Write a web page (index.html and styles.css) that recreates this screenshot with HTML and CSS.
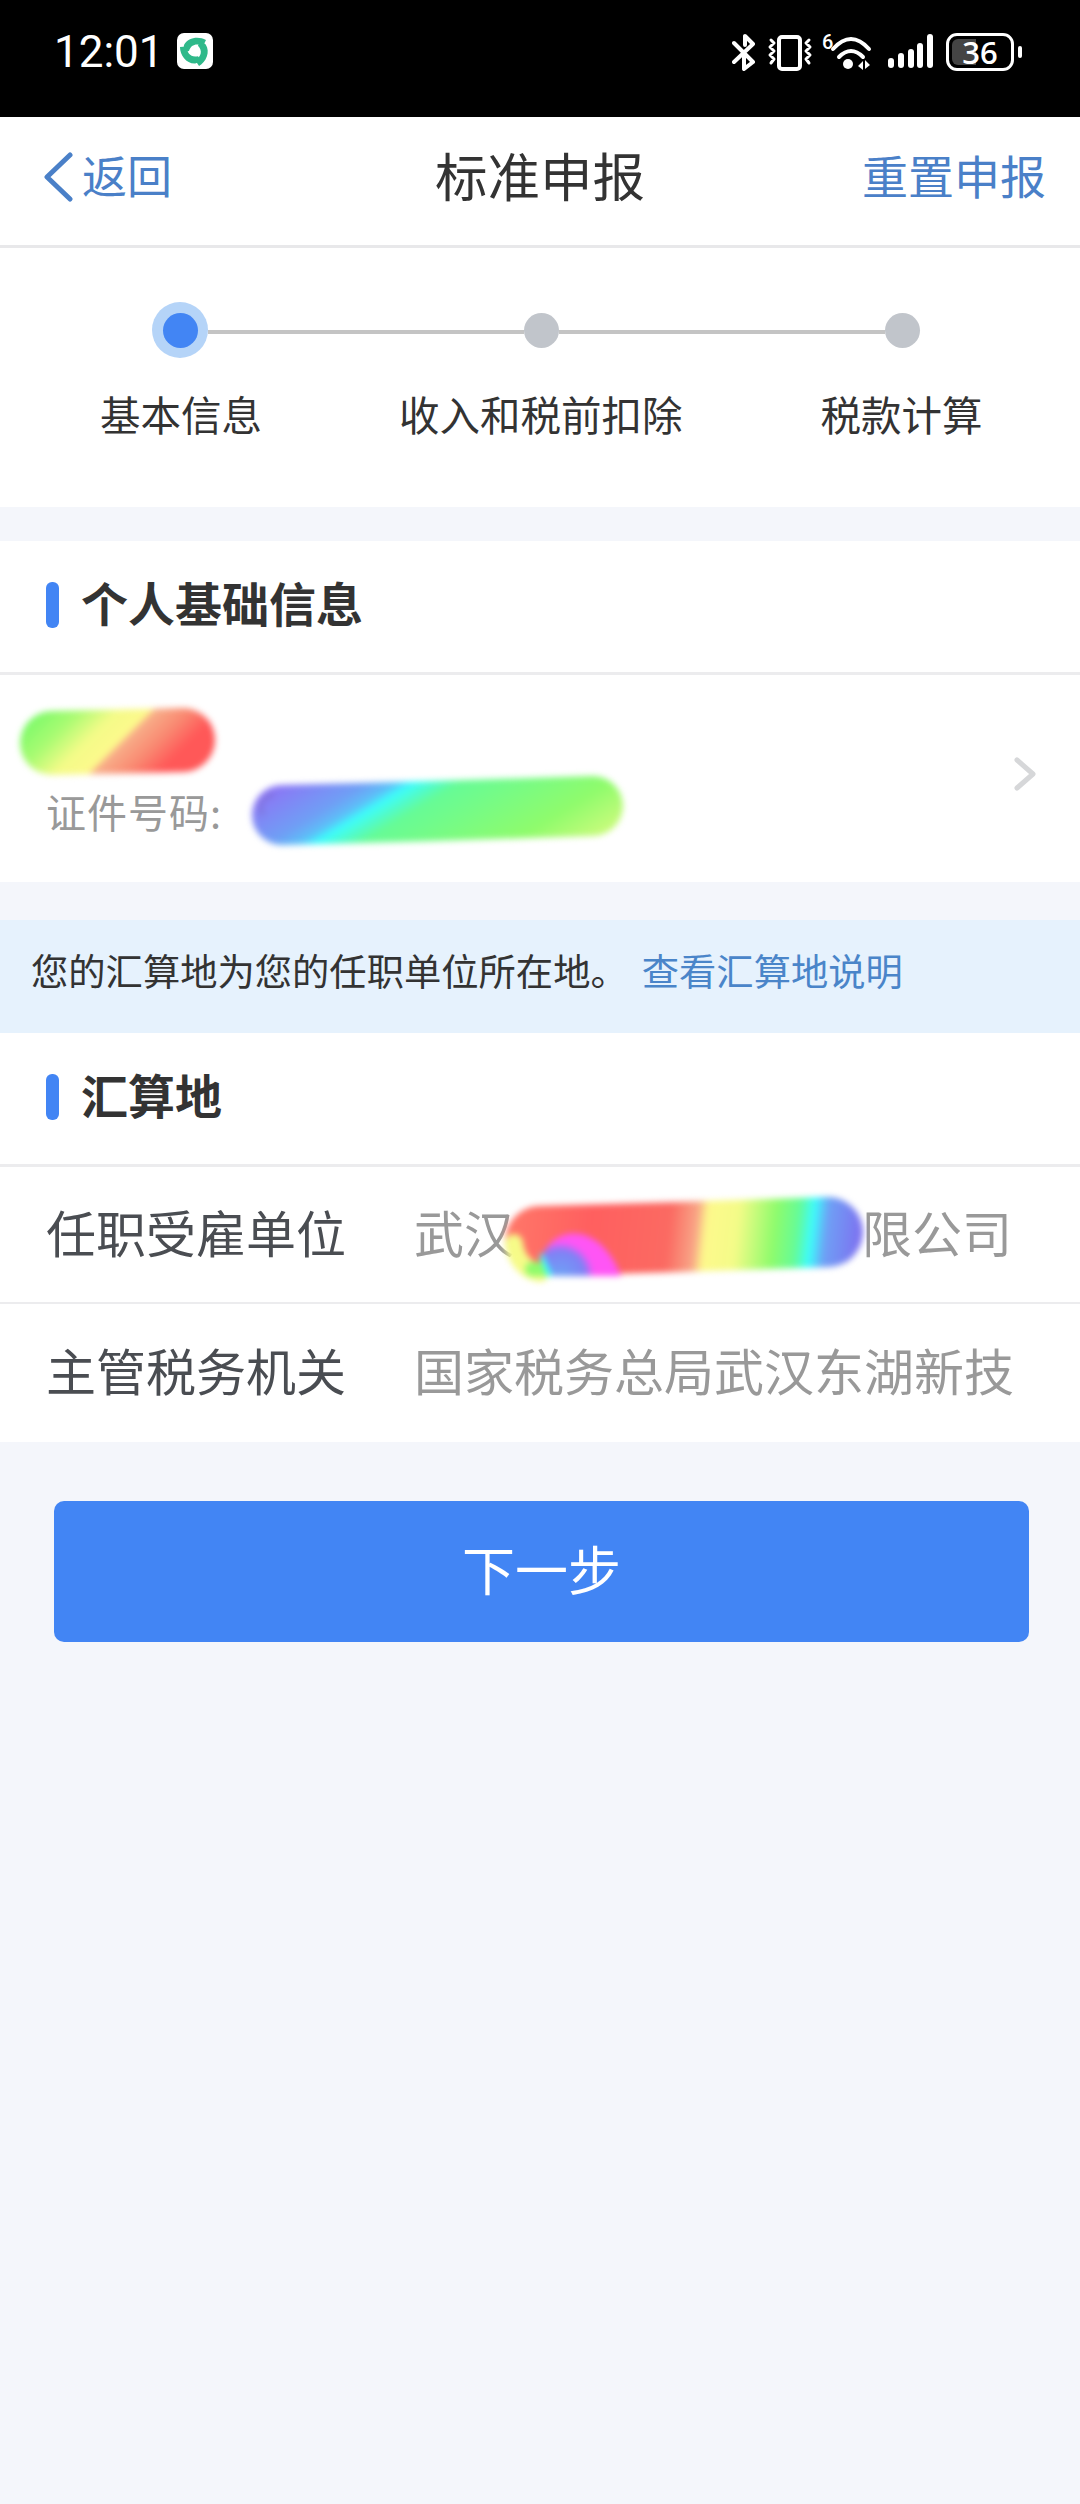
FILE: index.html
```html
<!DOCTYPE html>
<html lang="zh-CN">
<head>
    <meta charset="UTF-8">
    <meta name="viewport" content="width=device-width, initial-scale=1.0">
    <title>标准申报</title>
    <link rel="stylesheet" href="styles.css">
</head>
<body>
    <svg class="defs" width="0" height="0">
        <defs>
            <linearGradient id="rainbowA" gradientUnits="userSpaceOnUse" x1="0" y1="0" x2="110" y2="110">
                <stop offset="0.12" stop-color="#7dfa6a"/>
                <stop offset="0.3" stop-color="#a8fb72"/>
                <stop offset="0.48" stop-color="#f4fb88"/>
                <stop offset="0.63" stop-color="#fdf98c"/>
                <stop offset="0.645" stop-color="#f8b08a"/>
                <stop offset="0.8" stop-color="#f98a72"/>
                <stop offset="0.95" stop-color="#ff5858"/>
            </linearGradient>
            <linearGradient id="rainbowB" gradientUnits="userSpaceOnUse" x1="0" y1="0" x2="158" y2="256">
                <stop offset="0.1" stop-color="#8a78f5"/>
                <stop offset="0.24" stop-color="#6f9ff5"/>
                <stop offset="0.29" stop-color="#5cc0f8"/>
                <stop offset="0.32" stop-color="#3dfcfc"/>
                <stop offset="0.4" stop-color="#66fb96"/>
                <stop offset="0.66" stop-color="#8ffb6c"/>
                <stop offset="0.85" stop-color="#e0fb82"/>
            </linearGradient>
            <linearGradient id="rainbowC" gradientUnits="userSpaceOnUse" x1="0" y1="0" x2="372" y2="40">
                <stop offset="0" stop-color="#ff7a6a"/>
                <stop offset="0.25" stop-color="#ff5f5f"/>
                <stop offset="0.46" stop-color="#fb6a62"/>
                <stop offset="0.53" stop-color="#f8a486"/>
                <stop offset="0.56" stop-color="#fdf98c"/>
                <stop offset="0.64" stop-color="#f4fb88"/>
                <stop offset="0.74" stop-color="#8ffb6c"/>
                <stop offset="0.8" stop-color="#66fb96"/>
                <stop offset="0.84" stop-color="#3dfcfc"/>
                <stop offset="0.88" stop-color="#6f9ff5"/>
                <stop offset="0.97" stop-color="#7d72f0"/>
            </linearGradient>
            <radialGradient id="swirl" gradientUnits="userSpaceOnUse" cx="60" cy="85" r="61">
                <stop offset="0.05" stop-color="#6f9ff5"/>
                <stop offset="0.42" stop-color="#8080f5"/>
                <stop offset="0.55" stop-color="#ff55f5"/>
                <stop offset="1" stop-color="#ff55f5"/>
            </radialGradient>
        </defs>
    </svg>

    <div class="status-bar">
        <span class="clock">12:01</span>
        <svg class="app-icon" width="36" height="36" viewBox="0 0 36 36">
            <rect width="36" height="36" rx="7" fill="#fff"/>
            <g fill="#2fb98a">
                <path id="blade" d="M7 12C11 4 22 3 29 7L26 13C20 10 14 11 12 18L6 19z"/>
                <use href="#blade" transform="rotate(120 18 18)"/>
                <use href="#blade" transform="rotate(240 18 18)"/>
            </g>
        </svg>
        <div class="status-icons">
            <svg width="24" height="38" viewBox="0 0 24 38" fill="none" stroke="#fff" stroke-width="4" stroke-linecap="round" stroke-linejoin="round">
                <path d="M2 10L21 29l-9 7V20M2 29L21 11l-8-8v9"/>
            </svg>
            <svg class="gap-vib" width="46" height="38" viewBox="0 0 46 38" fill="none" stroke="#fff" stroke-linecap="round" stroke-linejoin="round">
                <rect x="12" y="4" width="21" height="32" rx="3" stroke-width="4"/>
                <path d="M4 7l3 3-4 4 4 4-4 4 4 4-3 4M42 7l-3 3 4 4-4 4 4 4-4 4 3 4" stroke-width="3"/>
            </svg>
            <div class="wifi">
                <span class="wifi-six">6</span>
                <svg width="44" height="38" viewBox="0 0 44 38" fill="none" stroke="#fff" stroke-width="4" stroke-linecap="round">
                    <path d="M3 16Q21 -4 39 16M9 24Q21 12 33 24"/>
                    <circle cx="18" cy="31" r="5" fill="#fff" stroke="none"/>
                    <path d="M28 33l5-5v9zM35 27v9l5-4z" fill="#fff" stroke="none"/>
                </svg>
            </div>
            <svg class="gap-signal" width="46" height="38" viewBox="0 0 46 38" fill="#fff">
                <rect x="0" y="25" width="6" height="10" rx="3"/>
                <rect x="10" y="20" width="6" height="15" rx="3"/>
                <rect x="20" y="16" width="6" height="19" rx="3"/>
                <rect x="29" y="10" width="6" height="25" rx="3"/>
                <rect x="39" y="1" width="6" height="34" rx="3"/>
            </svg>
            <div class="battery">
                <div class="battery-body">
                    <span class="battery-fill"></span>
                    <span class="battery-num">36</span>
                </div>
                <span class="battery-tip"></span>
            </div>
        </div>
    </div>

    <div class="nav-bar">
        <div class="nav-back">
            <svg width="30" height="50" viewBox="0 0 30 50" fill="none" stroke="#4a80c8" stroke-width="5" stroke-linecap="round" stroke-linejoin="round">
                <path d="M26 3L3 25l23 22"/>
            </svg>
            <span>返回</span>
        </div>
        <div class="nav-title">标准申报</div>
        <div class="nav-reset">重置申报</div>
    </div>

    <div class="steps">
        <div class="step-track">
            <span class="dot-wrap"><span class="dot active"></span></span>
            <span class="step-line step-line-first"></span>
            <span class="dot"></span>
            <span class="step-line"></span>
            <span class="dot"></span>
        </div>
        <div class="step-labels">
            <span>基本信息</span>
            <span>收入和税前扣除</span>
            <span>税款计算</span>
        </div>
    </div>

    <div class="panel panel-first">
        <div class="panel-head"><span class="head-mark"></span><span class="head-text">个人基础信息</span></div>
        <div class="person">
            <div class="person-id">证件号码:</div>
            <svg class="chevron" width="24" height="36" viewBox="0 0 24 36" fill="none" stroke="#d6d7d9" stroke-width="5" stroke-linecap="round" stroke-linejoin="round">
                <path d="M4 4l16 14L4 32"/>
            </svg>
            <svg class="redact redact-name" width="200" height="72" viewBox="0 0 200 72">
                <path d="M34 38L165 35" stroke="url(#rainbowA)" stroke-width="64" stroke-linecap="round" fill="none"/>
            </svg>
            <svg class="redact redact-id" width="386" height="80" viewBox="0 0 386 80">
                <path d="M36 42C130 40 260 36 347 33" stroke="url(#rainbowB)" stroke-width="60" stroke-linecap="round" fill="none"/>
                <path d="M18 42C10 34 18 22 28 22" stroke="#7468b8" stroke-width="1.5" fill="none"/>
            </svg>
        </div>
    </div>

    <div class="notice"><span class="notice-text">您的汇算地为您的任职单位所在地。<span class="notice-link">查看汇算地说明</span></span></div>

    <div class="panel">
        <div class="panel-head"><span class="head-mark"></span><span class="head-text">汇算地</span></div>
        <div class="field">
            <span class="field-name">任职受雇单位</span>
            <span class="field-value field-split"><span>武汉</span><span>限公司</span></span>
            <svg class="redact redact-company" width="372" height="100" viewBox="0 0 372 100">
                <path d="M40 50C130 48 240 44 328 41" stroke="url(#rainbowC)" stroke-width="70" stroke-linecap="round" fill="none"/>
                <path d="M14 52C16 70 28 80 40 82" stroke="#f6fb88" stroke-width="18" stroke-linecap="round" fill="none"/>
                <path d="M32 78L44 78" stroke="#8ffb6c" stroke-width="14" stroke-linecap="round" fill="none"/>
                <path d="M50 85L42 63" stroke="#3dfcfc" stroke-width="6" fill="none"/>
                <path d="M53 85L43 63C55 35 100 30 121 85z" fill="url(#swirl)"/>
            </svg>
        </div>
        <div class="field">
            <span class="field-name">主管税务机关</span>
            <span class="field-value">国家税务总局武汉东湖新技</span>
        </div>
    </div>

    <div class="next-btn"><span class="next-text">下一步</span></div>
</body>
</html>
```

FILE: styles.css
```css
* {
    margin: 0;
    padding: 0;
    box-sizing: border-box;
}

html, body {
    height: 100%;
}

body {
    width: 1080px;
    min-height: 2504px;
    overflow: hidden;
    background-color: #f4f6fb;
    color: #333;
    font-family: "Noto Sans CJK SC", "Noto Sans", sans-serif;
}

.defs {
    display: block;
    height: 0;
}

/* status bar */
.status-bar {
    height: 117px;
    background: #000;
    color: #fff;
    display: flex;
    align-items: flex-start;
    padding: 33px 58px 0 54px;
}

.clock {
    font-family: Roboto, sans-serif;
    font-size: 44px;
    line-height: 38px;
}

.app-icon {
    margin-left: 13px;
}

.status-icons {
    margin-left: auto;
    display: flex;
    align-items: flex-start;
}

.gap-vib {
    margin-left: 11px;
}

.wifi {
    display: flex;
    margin-left: 9px;
}

.wifi-six {
    width: 8px;
    font-family: Roboto, sans-serif;
    font-size: 20px;
    line-height: 18px;
    font-weight: 500;
}

.gap-signal {
    margin-left: 14px;
}

.battery {
    margin-left: 12px;
    display: flex;
    align-items: center;
}

.battery-body {
    position: relative;
    width: 68px;
    height: 38px;
    border: 3px solid #fff;
    border-radius: 11px;
    display: flex;
    align-items: center;
    justify-content: center;
}

.battery-fill {
    position: absolute;
    left: 3px;
    top: 3px;
    bottom: 3px;
    width: 24px;
    background: #444;
    border-radius: 6px 0 0 6px;
}

.battery-num {
    position: relative;
    font-family: "Open Sans", sans-serif;
    font-size: 31px;
    font-weight: 600;
    line-height: 30px;
}

.battery-tip {
    width: 4px;
    height: 12px;
    margin-left: 4px;
    background: #fff;
    border-radius: 2px;
}

/* nav */
.nav-bar {
    height: 131px;
    background: #fff;
    border-bottom: 3px solid #e8e8ea;
    display: flex;
    align-items: center;
    padding: 0 34px 14px 44px;
}

.nav-back {
    flex: 1;
    display: flex;
    align-items: center;
    gap: 8px;
    color: #4a80c8;
    font-size: 45px;
}

.nav-back svg {
    margin-top: 6px;
}

.nav-title {
    margin-right: 10px;
    font-size: 52.5px;
    color: #333;
}

.nav-reset {
    flex: 1;
    text-align: right;
    font-size: 46px;
    color: #4a80c8;
}

/* steps */
.steps {
    height: 259px;
    background: #fff;
    padding-top: 54px;
}

.step-track {
    display: flex;
    align-items: center;
    padding-left: 152px;
    height: 56px;
}

.dot-wrap {
    width: 56px;
    height: 56px;
    border-radius: 50%;
    background: #b5d4f8;
    display: flex;
    align-items: center;
    justify-content: center;
}

.dot {
    flex: none;
    width: 35px;
    height: 35px;
    border-radius: 50%;
    background: #c1c5cb;
}

.dot.active {
    background: #4285f4;
}

.step-line {
    width: 326px;
    height: 4px;
    margin-top: 4px;
    background: #c4c4c4;
}

.step-line-first {
    width: 316px;
}

.step-labels {
    display: flex;
    margin-top: 28px;
    font-size: 40.5px;
    line-height: 56px;
    padding-left: 100px;
}

.step-labels span:nth-child(2) {
    margin-left: 137px;
}

.step-labels span:nth-child(3) {
    margin-left: 138px;
}

/* panels */
.panel {
    background: #fff;
}

.panel-first {
    margin-top: 34px;
}

.panel-head {
    height: 134px;
    border-bottom: 3px solid #ececee;
    display: flex;
    align-items: center;
    padding-left: 46px;
    padding-bottom: 4px;
    font-size: 47px;
    font-weight: 700;
    color: #333;
}

.head-text {
    padding-bottom: 6px;
}

.head-mark {
    width: 13px;
    height: 46px;
    margin-right: 22px;
    border-radius: 6px;
    background: #4285f4;
}

.person {
    position: relative;
    height: 207px;
    padding: 109px 0 0 46px;
}

.person-id {
    font-size: 40px;
    line-height: 54px;
    letter-spacing: 1px;
    color: #999;
}

.chevron {
    position: absolute;
    right: 43px;
    top: 81px;
}

.redact {
    position: absolute;
    filter: blur(3px);
}

.redact-name {
    left: 18px;
    top: 30px;
}

.redact-id {
    left: 246px;
    top: 98px;
}

.redact-company {
    left: 500px;
    top: 24px;
}

/* notice */
.notice {
    height: 113px;
    margin-top: 38px;
    padding-left: 31px;
    background: #e6f2fd;
    display: flex;
    align-items: center;
    font-size: 37.3px;
    color: #333;
}

.notice-text {
    padding-bottom: 14px;
}

.notice-link {
    margin-left: 14px;
    color: #4a85c9;
}

/* rows */
.field {
    position: relative;
    height: 137px;
    display: flex;
    align-items: center;
    padding: 0 0 8px 46px;
    border-bottom: 2px solid #ececee;
    font-size: 50px;
}

.field:last-child {
    border-bottom: none;
    height: 138px;
}

.field-name {
    width: 368px;
    flex: none;
    color: #4a4d52;
}

.field-value {
    white-space: nowrap;
    overflow: hidden;
    color: #999;
}

.field-split {
    width: 598px;
    display: flex;
    justify-content: space-between;
}

/* button */
.next-btn {
    height: 141px;
    margin: 59px 51px 0 54px;
    border-radius: 10px;
    background: #4285f4;
    color: #fff;
    display: flex;
    align-items: center;
    justify-content: center;
    font-size: 53px;
}

.next-text {
    padding-bottom: 8px;
}
```
